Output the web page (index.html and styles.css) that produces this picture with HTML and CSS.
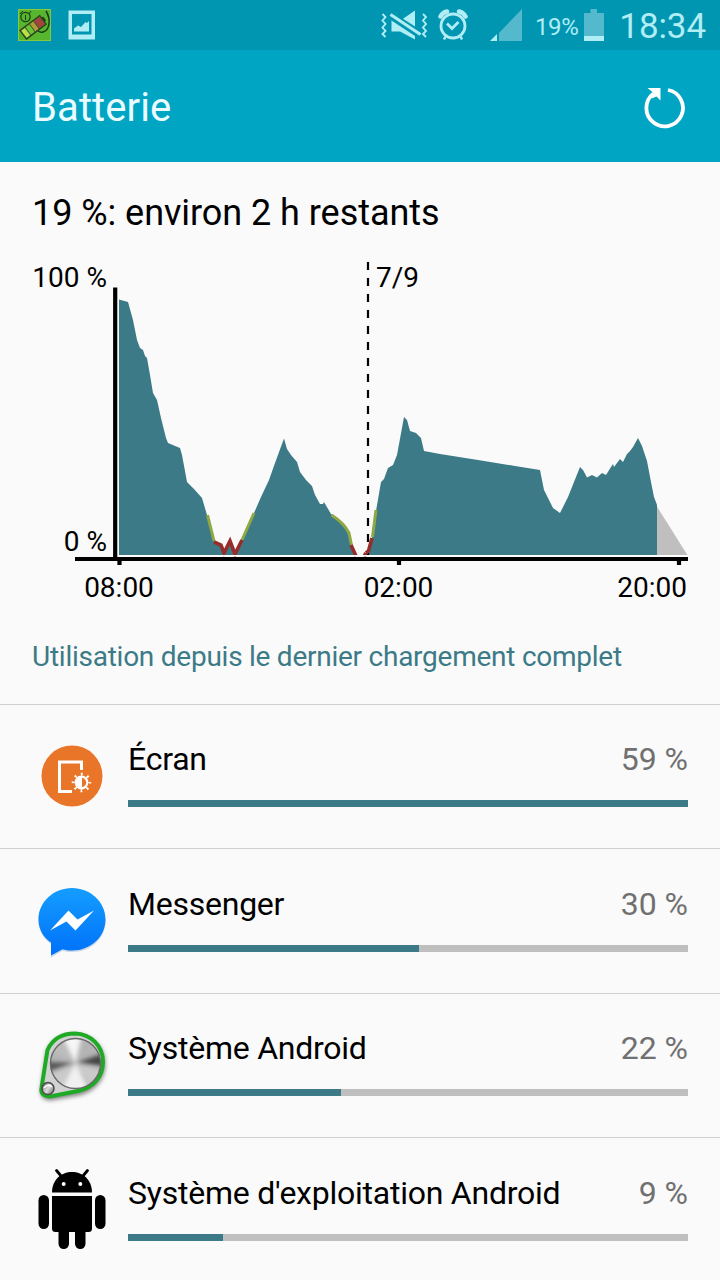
FILE: index.html
```html
<!DOCTYPE html>
<html lang="fr">
<head>
<meta charset="utf-8">
<title>Batterie</title>
<link rel="stylesheet" href="styles.css">
</head>
<body>
<div class="screen">
  <header class="status">
    <div class="status-left">
      <svg class="app-badge" width="33" height="32" viewBox="0 0 33 32">
        <rect width="33" height="32" fill="#58b52e"/>
        <rect x="0.5" y="0.5" width="32" height="31" fill="none" stroke="#8bc63f"/>
        <g transform="translate(15.500 18) rotate(-37)">
          <rect x="-13" y="-5.500" width="25" height="11" fill="#43552a" stroke="#24401c"/>
          <rect x="-12" y="-4.500" width="4.500" height="9" fill="#b9e04a"/>
          <rect x="-6.500" y="-4.500" width="4.500" height="9" fill="#66c435"/>
          <rect x="-1" y="-4.500" width="4" height="9" fill="#b29d3b"/>
          <rect x="4" y="-4.500" width="7" height="9" fill="#a3453a"/>
          <rect x="12" y="-2.500" width="2" height="5" fill="#24401c"/>
        </g>
        <path d="M28 2c5 8 4 19-3 21-2 .6-4-.3-5-1" fill="none" stroke="#173d18" stroke-width="1.500"/>
        <circle cx="7.500" cy="8" r="4.700" fill="none" stroke="#173d18" stroke-width="1.200"/>
        <path d="M7.500 6v5M2 5l3-3M11 5l2-3" stroke="#173d18" fill="none"/>
      </svg>
      <svg width="28" height="30" viewBox="0 0 28 30">
        <path fill="#b0edf5" fill-rule="evenodd" d="M.5.500h26.500v29H.5zM4 4v20.500h19.500V4z"/>
        <path fill="#b0edf5" d="M6 21.500v-3l4-3 3 1.500 4.500-5 1.500 1 2-2v10.500z"/>
      </svg>
    </div>
    <div class="status-right">
      <svg class="mute" width="47" height="31" viewBox="0 0 47 31" fill="#b0edf5">
        <path d="M34 .5V16.500L22 8.800z"/>
        <path d="M10.500 10.500V21.500H19L34 29.500V26z"/>
        <path d="M9.500 4.500L39.500 24.500" stroke="#b0edf5" stroke-width="3.200"/>
        <path d="M1.500 4l3 3-3 3.500 3 3.500-3 3.500 3 3.500-3 3 3 3M42 4l3 3-3 3.500 3 3.500-3 3.500 3 3.500-3 3 3 3" fill="none" stroke="#b0edf5" stroke-width="1.900"/>
      </svg>
      <svg class="alarm" width="30" height="32" viewBox="0 0 30 32" fill="none" stroke="#b0edf5">
        <circle cx="15" cy="17" r="12" stroke-width="2.800"/>
        <path d="M2.500 7.500Q4.500 3.500 9 2.500M21 2.500Q25.500 3.500 27.500 7.500" stroke-width="4.500" stroke-linecap="round"/>
        <path d="M9 14.500l5 5 6.500-6.500" stroke-width="2.800"/>
        <path d="M7.500 27.500l-1.500 3M22.500 27.500l1.500 3" stroke-width="2.500"/>
      </svg>
      <svg class="signal" width="33" height="32" viewBox="0 0 33 32">
        <path d="M0 32L7 25v7z" fill="#b0edf5"/>
        <path d="M9 24L32 0v32H9z" fill="#54b9cc"/>
      </svg>
      <span class="percent">19%</span>
      <svg class="cell" width="20" height="32" viewBox="0 0 20 32">
        <path d="M6.500 0h6.500v4h7v23H0V4h6.500z" fill="#54b9cc"/>
        <rect y="27" width="20" height="5" fill="#b0edf5"/>
      </svg>
      <span class="clock">18:34</span>
    </div>
  </header>

  <div class="titlebar">
    <h1 class="title">Batterie</h1>
    <svg width="42" height="42" viewBox="0 0 42 42">
      <path d="M25 3A18.300 18.300 0 1 1 10.500 6.500" fill="none" stroke="#fff" stroke-width="3.800"/>
      <path d="M4.500 1h13v12.500l-4-4-5 2-1-2.500 3-3z" fill="#fff"/>
    </svg>
  </div>

  <section class="summary">
    <h2 class="remaining">19 %: environ 2 h restants</h2>
    <svg class="chart" width="720" height="360" viewBox="0 250 720 360">
      <path class="forecast" d="M656 505L688 556H656z"/>
      <path class="level" d="M119 299.500L128 302 133 320 137 340 140 348 143 350 145 356 147 358 150 375 153 393 157 400 161 418 166 438 168 443 180 448 182 455 187 482 194 489 202 498 207 515 214 541 221 545 224 554 230 540 235 555.500 242 540 254 513 261 497 269 480 275 463 284 438.500 287 449 291 455 297 462 300 472 306 480 312 486 315 495 320 504 323 504 324 502 331 514 343 523 350 534 352 545 356 555.500H366L372 538 376 511 381 482 384 479 388 468 393 465 397 455 404 417 407 420 410 431 416 433 421 438 424 451 440 454 478 460 515 466 540 470 544 490 549 500 553 508 560 513 568 497 574 482 580 467 583 470 587 477.500 592 475 597 477.500 602 473 606 475 611 467 613 464 614 467 620 459 623 462 627 454 630 451 633 447 638 438 642 446 647 461 651 482 654 497 657 505V556H119z"/>
      <path class="line warn" d="M207.500 515L214 541M242 540L254 513M331.500 515Q344 523 349 533L351.500 545M372.500 537L376 510"/>
      <path class="line crit" d="M214 542L221 545 224 553 230 541 235 554 242 540M351 545L356 556M364 556.500L366 553"/>
      <path class="midnight" d="M368 262V556"/>
      <path class="line crit" d="M366 553L368.500 551 372 538"/>
      <path class="halo" d="M118.200 299V555.700M118 555.700H688"/>
      <path class="axis" d="M115.200 287.500V559M75 559H688M119.500 559v6M399 559v6M679 559v6"/>
      <text x="107" y="287" text-anchor="end">100 %</text>
      <text x="107" y="551" text-anchor="end">0 %</text>
      <text x="376" y="287">7/9</text>
      <text x="119" y="597" text-anchor="middle">08:00</text>
      <text x="398.500" y="597" text-anchor="middle">02:00</text>
      <text x="687" y="597" text-anchor="end">20:00</text>
    </svg>
    <p class="caption">Utilisation depuis le dernier chargement complet</p>
  </section>

  <ul class="usage">
    <li class="row">
      <svg class="icon" width="80" height="90" viewBox="32 730 80 90">
        <circle cx="72" cy="776" r="30.500" fill="#e97529"/>
        <path d="M81.500 770v-8H59.500v29.500H72" fill="none" stroke="#fff" stroke-width="3"/>
        <circle cx="81.500" cy="782.500" r="5.800" fill="none" stroke="#fff" stroke-width="2.200"/>
        <path d="M82 776a6.500 6.500 0 0 0 0 13z" fill="#fff"/>
        <circle cx="81.500" cy="782.500" r="8.300" fill="none" stroke="#fff" stroke-width="3" stroke-dasharray="1.800 4.720" stroke-dashoffset=".9"/>
      </svg>
      <div class="detail">
        <div class="line-text"><span class="name">Écran</span><span class="share">59 %</span></div>
        <div class="track"><div class="fill" style="width:100%"></div></div>
      </div>
    </li>
    <li class="row">
      <svg class="icon" width="80" height="90" viewBox="32 875 80 90">
        <defs><linearGradient id="blue" x1="0" y1="0" x2="0" y2="1"><stop offset="0" stop-color="#149dff"/><stop offset="1" stop-color="#0071fa"/></linearGradient></defs>
        <path d="M51 957.500V944C43.500 938.500 38.500 930.500 38.500 921 38.500 903 53.500 889 72 889s33.500 14 33.500 32-15 31-33.500 31c-3.500 0-6.500-.4-9.500-1.200z" fill="#a9bfd9" transform="translate(0 1)" opacity=".6"/>
        <path d="M51 956.500V943.500C43.500 938.500 38.500 930.500 38.500 920.500 38.500 903 53.500 889 72 889s33.500 14 33.500 31.500-15 31-33.500 31c-3.500 0-6.500-.4-9.500-1.200z" fill="url(#blue)"/>
        <path d="M50 931.500L68.500 911.500 77.500 920.500 94 911.500 75.500 931.500 66.500 922.500z" fill="#fff"/>
      </svg>
      <div class="detail">
        <div class="line-text"><span class="name">Messenger</span><span class="share">30 %</span></div>
        <div class="track"><div class="fill" style="width:52%"></div></div>
      </div>
    </li>
    <li class="row">
      <svg class="icon" width="80" height="90" viewBox="32 1019 80 90">
        <defs>
          <linearGradient id="metal" x1="0" y1=".2" x2="1" y2=".8"><stop offset="0" stop-color="#777"/><stop offset=".5" stop-color="#ddd"/><stop offset="1" stop-color="#777"/></linearGradient>
          <filter id="soft" x="-20%" y="-20%" width="140%" height="140%"><feGaussianBlur stdDeviation="2"/></filter>
          <filter id="smooth"><feGaussianBlur stdDeviation="2.200"/></filter>
          <clipPath id="knob"><circle cx="75.500" cy="1063.500" r="25"/></clipPath>
        </defs>
        <path d="M46.500 1050Q54 1033 75 1033.500C91 1034 103 1046 103 1062S92 1089 78 1092L50 1097Q40 1097 41 1088z" fill="#555" stroke="#666" stroke-width="3" filter="url(#soft)" opacity=".75" transform="translate(1 2)"/>
        <path d="M47.500 1050Q55 1033.500 75 1033.500C91 1034 103 1046 103 1062S92 1088 78 1091L50 1096.500Q40 1096 41.500 1088z" fill="#d2d2d2" stroke="#1eaa24" stroke-width="4"/>
        <g clip-path="url(#knob)">
          <rect x="50" y="1038" width="51" height="51" fill="#b4b4b4"/>
          <g filter="url(#smooth)">
            <path d="M75.500 1063L46 1062v10z" fill="#555"/>
            <path d="M75.500 1063L105 1053v13z" fill="#444"/>
            <path d="M75.500 1063L48 1050l9-15h8z" fill="#bcbcbc"/>
            <path d="M75.500 1063L62 1035h20z" fill="#f6f6f6"/>
            <path d="M75.500 1063L60 1092h30z" fill="#f0f0f0"/>
            <path d="M75.500 1063L45 1077l12 18zM75.500 1063l29 8-10 22z" fill="#cacaca"/>
          </g>
        </g>
        <circle cx="75.500" cy="1063.500" r="25" fill="none" stroke="#686868" stroke-width="1.400"/>
        <circle cx="48" cy="1088.500" r="6" fill="url(#metal)" stroke="#4b4b4b" stroke-width="1.500"/>
        <path d="M44 1088q4-5 8-1" fill="none" stroke="#fff" stroke-width="1.500"/>
      </svg>
      <div class="detail">
        <div class="line-text"><span class="name">Système Android</span><span class="share">22 %</span></div>
        <div class="track"><div class="fill" style="width:38%"></div></div>
      </div>
    </li>
    <li class="row">
      <svg class="icon" width="80" height="90" viewBox="32 1164 80 90">
        <path d="M52 1193.500C52 1181 61 1173 72 1173s20 8 20 20.500z"/>
        <path d="M56.500 1171.500l5 6M87.500 1171.500l-5 6" stroke="#000" stroke-width="2.800" stroke-linecap="round"/>
        <path d="M52 1197h40v32.500q0 3.500-3.500 3.500h-33q-3.500 0-3.500-3.500z"/>
        <rect x="38.500" y="1196" width="10.500" height="34" rx="5.200"/>
        <rect x="95" y="1196" width="10.500" height="34" rx="5.200"/>
        <rect x="58.500" y="1220" width="10.500" height="30" rx="5.200"/>
        <rect x="75" y="1220" width="10.500" height="30" rx="5.200"/>
        <circle cx="63.700" cy="1185" r="2" fill="#fff"/><circle cx="80.300" cy="1185" r="2" fill="#fff"/>
      </svg>
      <div class="detail">
        <div class="line-text"><span class="name">Système d'exploitation Android</span><span class="share">9 %</span></div>
        <div class="track"><div class="fill" style="width:17%"></div></div>
      </div>
    </li>
  </ul>
</div>
</body>
</html>
```
FILE: styles.css
```css
* { box-sizing: border-box; }
body { margin: 0; font-family: Roboto, "Noto Sans", sans-serif; color: #000; background: #fafafa; }
h1, h2, p, ul { margin: 0; padding: 0; font-weight: 400; }
svg { display: block; flex: none; }
.screen { width: 720px; height: 1280px; overflow: hidden; background: #fafafa; }

.status { height: 50px; display: flex; justify-content: space-between; align-items: center; padding: 0 14px 0 18px; background: #0096b1; color: #b0edf5; }
.status-left { display: flex; align-items: center; gap: 17px; }
.status-right { display: flex; align-items: center; }
.alarm { margin-left: 10px; }
.signal { margin-left: 22px; }
.percent { margin-left: 12px; font-size: 24px; letter-spacing: -0.4px; line-height: 50px; padding-top: 3px; }
.cell { margin-left: 6px; }
.clock { margin-left: 15px; font-size: 35px; letter-spacing: -0.1px; line-height: 50px; padding-top: 4px; }

.titlebar { height: 112px; display: flex; justify-content: space-between; align-items: center; padding: 4px 35px 0 32px; background: #00a5c3; color: #e9fcff; }
.title { font-size: 40px; line-height: 56px; letter-spacing: 0.1px; }

.summary { height: 541.7px; padding-top: 29px; }
.remaining { padding-left: 32px; font-size: 36px; line-height: 44px; letter-spacing: -0.05px; }
.chart { margin-top: 15px; font-size: 28px; }
.level { fill: #3c7a87; }
.forecast { fill: #bfbfbf; }
.line { fill: none; stroke-width: 3; }
.warn { stroke: #8fa843; }
.crit { stroke: #972d2a; stroke-width: 3.6; }
.halo { fill: none; stroke: #fff; stroke-width: 1.5; }
.midnight { stroke: #000; stroke-width: 2.2; stroke-dasharray: 8 8; }
.axis { fill: none; stroke: #000; stroke-width: 4.2; }
.caption { margin-top: 30px; padding-left: 32px; font-size: 28px; line-height: 34px; letter-spacing: -0.25px; color: #3c7a87; }

.usage { list-style: none; }
.row { height: 144.6px; display: flex; border-top: 1.5px solid #cfcfcf; padding: 25px 32px 0; }
.detail { flex: 1; margin-left: 16px; padding-top: 9.3px; }
.line-text { display: flex; justify-content: space-between; font-size: 32px; line-height: 40px; }
.name { letter-spacing: -0.24px; }
.share { color: #707070; }
.track { height: 7px; margin-top: 21px; background: #bfbfbf; }
.fill { height: 7px; background: #3c7a87; }
```
